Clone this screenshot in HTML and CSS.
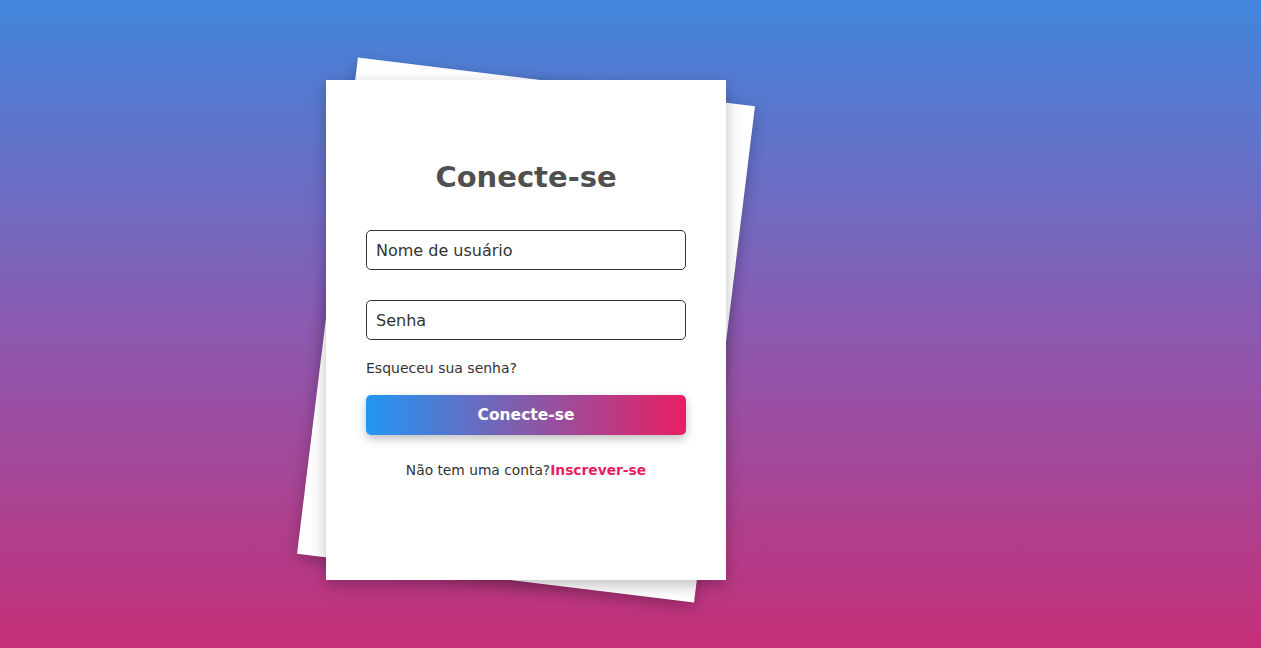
FILE: index.html
```html
<!DOCTYPE html>
<html lang="pt">
<head>
<meta charset="utf-8">
<title>Conecte-se</title>
<link rel="stylesheet" href="styles.css">
</head>
<body>
<main class="page">
  <div class="stack">
    <div class="paper"></div>
    <form class="card">
      <h1 class="title">Conecte-se</h1>
      <input class="field" type="text" placeholder="Nome de usuário">
      <input class="field field-pass" type="password" placeholder="Senha">
      <a class="forgot" href="#">Esqueceu sua senha?</a>
      <button class="btn" type="button">Conecte-se</button>
      <p class="signup">Não tem uma conta?<a href="#">Inscrever-se</a></p>
    </form>
  </div>
</main>
</body>
</html>
```
FILE: styles.css
```css
* { box-sizing: border-box; }
html, body { margin: 0; height: 100%; }
body {
  font-family: "DejaVu Sans", "Noto Sans", sans-serif;
  background: linear-gradient(to bottom, #4186dc 0%, #8a5ab1 50%, #c52f78 100%);
  overflow: hidden;
}
.page {
  height: 648px;
  padding: 80px 0 0 326px;
}
.stack {
  position: relative;
  width: 400px;
  height: 500px;
}
.paper {
  position: absolute;
  inset: 0;
  background: #fff;
  transform: rotate(7deg);
  box-shadow: 0 5px 15px rgba(0,0,0,.25);
}
.card {
  position: relative;
  width: 400px;
  height: 500px;
  background: #fff;
  box-shadow: 0 5px 15px rgba(0,0,0,.25);
  padding: 77px 40px 0;
  display: flex;
  flex-direction: column;
}
.title {
  margin: 0 0 33px;
  text-align: center;
  font-size: 29px;
  line-height: 40px;
  font-weight: 700;
  color: #4f4f4f;
}
.field {
  height: 40px;
  border: 1px solid #333;
  border-radius: 5px;
  padding: 0 9px;
  font-family: inherit;
  font-size: 16px;
  color: #333;
  outline: none;
}
.field::placeholder { color: #333; }
.field-pass { margin-top: 30px; }
.forgot {
  margin-top: 18px;
  font-size: 14px;
  line-height: 20px;
  color: #333;
  text-decoration: none;
}
.btn {
  margin-top: 17px;
  height: 40px;
  border: none;
  border-radius: 5px;
  background: linear-gradient(to right, #2196f3, #e91e63);
  color: #fff;
  font-family: inherit;
  font-size: 15.5px;
  font-weight: 600;
  box-shadow: 0 4px 10px rgba(0,0,0,.25);
}
.signup {
  margin: 25px 0 0;
  text-align: center;
  font-size: 13.8px;
  line-height: 20px;
  color: #333;
}
.signup a {
  color: #e91e63;
  font-weight: 700;
  text-decoration: none;
}
```
